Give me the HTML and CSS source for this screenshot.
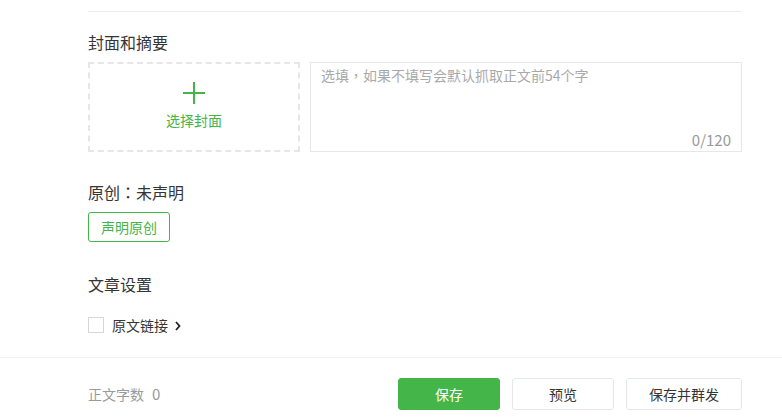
FILE: index.html
```html
<!DOCTYPE html>
<html lang="zh-CN">
<head>
<meta charset="utf-8">
<title>编辑</title>
<link rel="stylesheet" href="styles.css">
</head>
<body>
<div class="main">
  <div class="top-rule"></div>
  <h3 class="section-title first">封面和摘要</h3>
  <div class="cover-row">
    <div class="cover-box">
      <svg class="plus" width="22" height="22" viewBox="0 0 22 22" aria-hidden="true">
        <rect x="0" y="10" width="22" height="2" fill="#44b549"/>
        <rect x="10" y="0" width="2" height="22" fill="#44b549"/>
      </svg>
      <span class="cover-label">选择封面</span>
    </div>
    <div class="digest">
      <span class="placeholder">选填<span class="punct" lang="zh-TW">，</span>如果不填写会默认抓取正文前54个字</span>
      <span class="counter">0/120</span>
    </div>
  </div>
  <h3 class="section-title origin">原创<span class="punct" lang="zh-TW">：</span>未声明</h3>
  <button class="btn-outline">声明原创</button>
  <h3 class="section-title settings">文章设置</h3>
  <label class="check-row">
    <span class="checkbox"></span>
    <span class="check-label">原文链接</span>
    <svg class="chev" width="6" height="10" viewBox="0 0 6 10" aria-hidden="true">
      <path d="M1 1 L4.5 5 L1 9" fill="none" stroke="#222" stroke-width="1.8"/>
    </svg>
  </label>
</div>
<div class="footer">
  <span class="word-count">正文字数<span class="count-num">0</span></span>
  <div class="actions">
    <button class="btn btn-primary">保存</button>
    <button class="btn btn-default">预览</button>
    <button class="btn btn-default wide">保存并群发</button>
  </div>
</div>
</body>
</html>
```
FILE: styles.css
```css
* { box-sizing: border-box; }
html, body { margin: 0; padding: 0; background: #fff; }
body {
  font-family: "Microsoft YaHei", "Noto Sans CJK SC", "Noto Sans", sans-serif;
  color: #353535;
  font-size: 14px;
  width: 782px;
  height: 417px;
  overflow: hidden;
}
.punct {
  font-family: "Noto Sans CJK TC", "Noto Sans CJK SC", sans-serif;
}
.main {
  padding: 0 40px 0 88px;
}
.top-rule {
  margin-top: 11px;
  border-top: 1px solid #ececec;
}
.section-title {
  margin: 0;
  font-size: 16px;
  font-weight: normal;
  line-height: 24px;
  color: #353535;
}
.section-title.first { margin-top: 18px; }
.section-title.origin { margin-top: 28px; }
.section-title.settings { margin-top: 30px; }
.cover-row {
  margin-top: 8px;
  display: flex;
  gap: 10px;
  height: 90px;
}
.cover-box {
  width: 212px;
  height: 90px;
  border: 2px dashed #e6e6e6;
  display: flex;
  flex-direction: column;
  align-items: center;
  justify-content: center;
  gap: 6px;
  padding-bottom: 2px;
}
.plus { display: block; }
.cover-label {
  color: #44b549;
  font-size: 14px;
  line-height: 20px;
}
.digest {
  flex: 1;
  border: 1px solid #e7e7eb;
  padding: 2px 10px 1px 10px;
  display: flex;
  flex-direction: column;
  justify-content: space-between;
}
.placeholder {
  color: #a9a9a9;
  line-height: 20px;
}
.counter {
  align-self: flex-end;
  color: #999;
  line-height: 20px;
  font-size: 15px;
}
.btn-outline {
  margin-top: 8px;
  display: block;
  width: 82px;
  height: 30px;
  border: 1px solid #44b549;
  border-radius: 3px;
  background: #fff;
  color: #44b549;
  font-family: inherit;
  font-size: 14px;
  padding: 0;
  line-height: 28px;
}
.check-row {
  margin-top: 17px;
  display: flex;
  align-items: center;
  height: 24px;
}
.checkbox {
  width: 16px;
  height: 16px;
  border: 1px solid #d6d6d6;
  background: #fff;
  margin-right: 8px;
}
.check-label {
  line-height: 24px;
  margin-right: 7px;
}
.chev { display: block; margin-top: 1px; }
.footer {
  margin-top: 20px;
  border-top: 1px solid #f1f1f1;
  padding: 20px 40px 0 88px;
  display: flex;
  align-items: center;
  justify-content: space-between;
}
.word-count {
  color: #9a9a9a;
  font-size: 14px;
  line-height: 32px;
}
.count-num {
  margin-left: 8px;
  font-size: 15px;
}
.actions {
  display: flex;
  gap: 12px;
}
.btn {
  width: 102px;
  height: 32px;
  border-radius: 3px;
  font-family: inherit;
  font-size: 14px;
  padding: 0;
  line-height: 30px;
}
.btn.wide { width: 116px; }
.btn-primary {
  background: #44b549;
  border: 1px solid #44b549;
  color: #fff;
}
.btn-default {
  background: #fff;
  border: 1px solid #e4e8eb;
  color: #353535;
}
```
